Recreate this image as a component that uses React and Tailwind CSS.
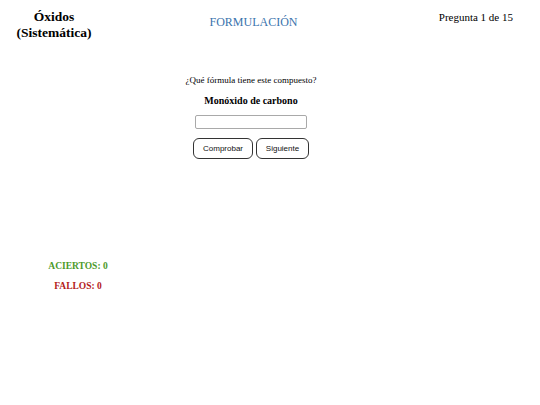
export default function App() {
  return (
    <div className="w-[540px] h-[405px] bg-white font-['Liberation_Serif',serif] text-black">
      {/* Header */}
      <div className="flex items-start">
        <div className="w-[108px] pt-[9px] text-center text-[13.5px] leading-[16px] font-bold">
          <div>Óxidos</div>
          <div>(Sistemática)</div>
        </div>
        <div className="flex-1 pt-[15px] text-center text-[12px] leading-[14px] text-[#3a74ad]">
          FORMULACIÓN
        </div>
        <div className="w-[141px] pt-[11px] pr-[27px] text-right text-[11px] leading-[13px]">
          Pregunta 1 de 15
        </div>
      </div>

      {/* Question */}
      <div className="w-[502px] mt-[33px] flex flex-col items-center">
        <p className="text-[9px] leading-[12px]">¿Qué fórmula tiene este compuesto?</p>
        <p className="mt-[8px] text-[10px] leading-[14px] font-bold">Monóxido de carbono</p>
        <input
          type="text"
          className="mt-[7px] w-[112px] h-[14px] border border-[#a9a9a9] rounded-[2px] outline-none"
        />
        <div className="mt-[9px] flex gap-[3px] font-['Liberation_Sans',sans-serif] text-[8px] text-[#111]">
          <button className="w-[60px] h-[21px] border border-[#333] rounded-[6px] bg-white">Comprobar</button>
          <button className="w-[53px] h-[21px] border border-[#333] rounded-[6px] bg-white">Siguiente</button>
        </div>
      </div>

      {/* Stats */}
      <div className="w-[156px] mt-[101px] flex flex-col items-center text-[9.5px] leading-[12px] font-bold">
        <p className="text-[#4c9a2a]">ACIERTOS: 0</p>
        <p className="mt-[8px] text-[#b31b1b]">FALLOS: 0</p>
      </div>
    </div>
  );
}
